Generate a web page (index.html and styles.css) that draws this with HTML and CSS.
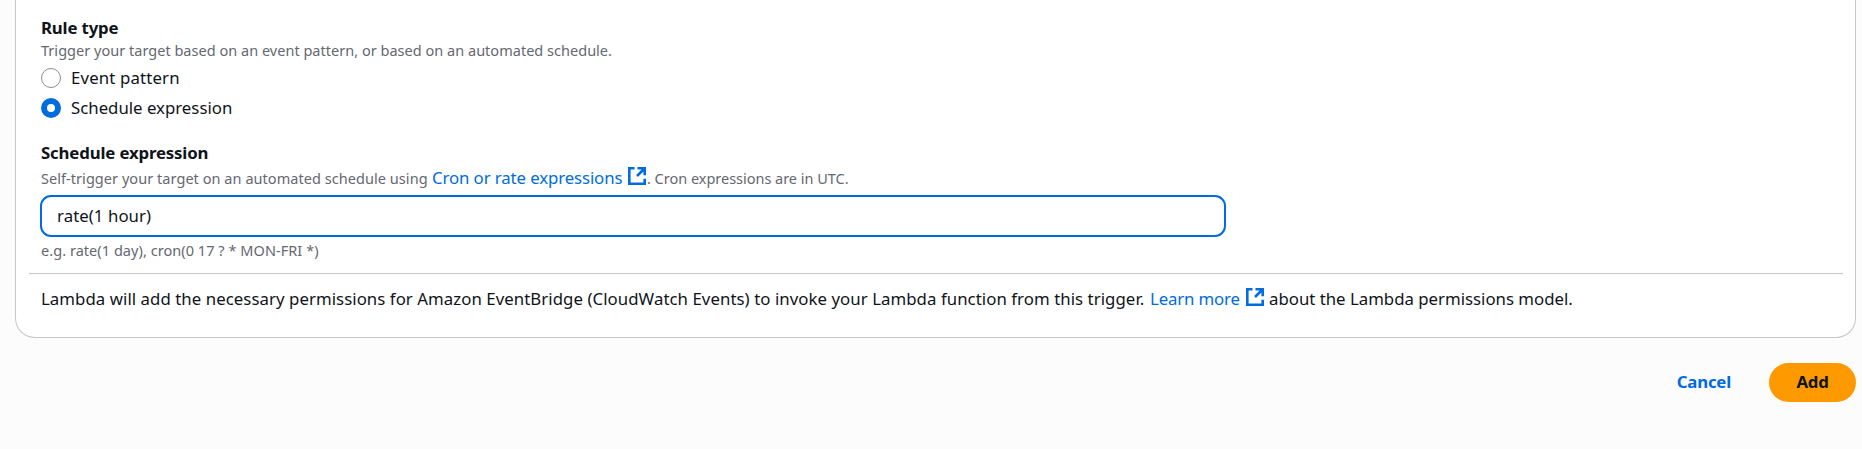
FILE: index.html
```html
<!DOCTYPE html>
<html lang="en">
<head>
<meta charset="utf-8">
<title>Add trigger</title>
<link rel="stylesheet" href="styles.css">
</head>
<body>
<main class="page">
  <section class="card">
    <div class="fields">
      <div class="label rule-label">Rule type</div>
      <div class="hint">Trigger your target based on an event pattern, or based on an automated schedule.</div>
      <div class="radios">
        <div class="radio"><span class="dot"></span><span class="opt-event">Event pattern</span></div>
        <div class="radio"><span class="dot checked"></span><span class="opt-schedule">Schedule expression</span></div>
      </div>
      <div class="label schedule-label">Schedule expression</div>
      <div class="hint-line">
        <span class="hint self">Self-trigger your target on an automated schedule using</span>
        <a class="link cron-link">Cron or rate expressions</a>
        <svg class="external" viewBox="0 0 18 18"><path d="M6.5 1.3H1.3v15.4h15.4v-5M9.5 1.3h7.2V8.3M16.5 1.5L9 9"/></svg>
        <span class="hint utc">. Cron expressions are in UTC.</span>
      </div>
      <div class="input"><span>rate(1 hour)</span></div>
      <div class="hint example">e.g. rate(1 day), cron(0 17 ? * MON-FRI *)</div>
    </div>
    <div class="footer">
      <span class="perm">Lambda will add the necessary permissions for Amazon EventBridge (CloudWatch Events) to invoke your Lambda function from this trigger.</span>
      <a class="link learn">Learn more</a>
      <svg class="external" viewBox="0 0 18 18"><path d="M6.5 1.3H1.3v15.4h15.4v-5M9.5 1.3h7.2V8.3M16.5 1.5L9 9"/></svg>
      <span class="model">about the Lambda permissions model.</span>
    </div>
  </section>
  <div class="actions">
    <a class="cancel">Cancel</a>
    <button class="add">Add</button>
  </div>
</main>
</body>
</html>
```
FILE: styles.css
```css
* { box-sizing: border-box; }
body {
  margin: 0;
  height: 449px;
  overflow: hidden;
  background: #fcfcfd;
  color: #0f141a;
  font: 16.8px/25px "Noto Sans", sans-serif;
  letter-spacing: 0;
  white-space: nowrap;
}
.page { padding: 0 6px 0 15px; }
.card {
  height: 338px;
  background: #fff;
  border: 1px solid #c6c6cd;
  border-top: 0;
  border-radius: 0 0 20px 20px;
  padding: 15px 12px 0 13px;
}
.fields { height: 258px; padding-left: 12px; }
.label { font-weight: 700; font-size: 16.8px; height: 25px; letter-spacing: -0.15px; }
.hint { font-size: 14.5px; line-height: 20px; color: #656871; letter-spacing: 0.02px; }
.radios { display: grid; gap: 5px; margin-top: 5px; }
.radio { display: flex; align-items: center; gap: 10px; height: 25px; }
.opt-event { letter-spacing: 0.15px; }
.dot { width: 20px; height: 20px; border: 1px solid #8c8c94; border-radius: 50%; }
.dot.checked { border: 6px solid #006ce0; }
.schedule-label { margin-top: 20px; }
.hint-line, .footer { display: flex; align-items: baseline; }
.hint-line { height: 30px; }
.link { color: #006ce0; }
.hint-line .link { width: 196px; margin-left: 5px; letter-spacing: -0.1px; }
.self { width: 386px; letter-spacing: 0.05px; }
.external { width: 18px; height: 18px; flex: none; align-self: flex-start; margin-top: 2px; fill: none; stroke: #006ce0; stroke-width: 2.6; }
.hint-line .utc { margin-left: 1px; letter-spacing: -0.02px; }
.input {
  display: flex;
  align-items: center;
  width: 1186px;
  height: 42px;
  margin-left: -1px;
  padding: 0 15px 2px;
  border: 2px solid #006ce0;
  border-radius: 11px;
  letter-spacing: 0.06px;
}
.example { margin-top: 3px; letter-spacing: 0.05px; }
.footer { border-top: 1px solid #c6c6cd; padding: 12px 0 0 12px; }
.perm { width: 1109px; letter-spacing: 0.06px; }
.learn { width: 96px; letter-spacing: -0.15px; }
.model { margin-left: 5px; }
.actions { display: flex; justify-content: flex-end; align-items: center; margin-top: 25px; }
.cancel { color: #006ce0; font-weight: 700; letter-spacing: -0.2px; margin-right: 38px; padding-bottom: 2px; }
.add {
  width: 87px;
  height: 39px;
  padding: 0 0 2px;
  border: 0;
  border-radius: 20px;
  background: #ff9900;
  color: #0f141a;
  font: 700 16.8px/25px "Noto Sans", sans-serif;
  letter-spacing: -0.2px;
}
```
